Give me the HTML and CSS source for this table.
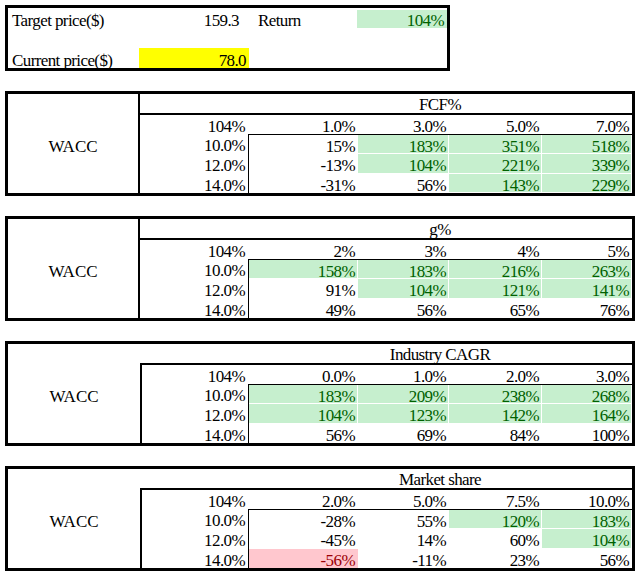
FILE: index.html
```html
<!DOCTYPE html>
<html lang="en">
<head>
<meta charset="utf-8">
<title>Valuation sensitivity</title>
<link rel="stylesheet" href="styles.css">
</head>
<body>
<div class="sheet">
  <div class="summary">
    <div class="c txt">Target price($)</div>
    <div class="c num pad10">159.3</div>
    <div class="c txt ind">Return</div>
    <div class="c num good">104%</div>
    <div class="c"></div><div class="c"></div><div class="c"></div><div class="c"></div>
    <div class="c txt">Current price($)</div>
    <div class="c num yellow">78.0</div>
    <div class="c"></div><div class="c"></div>
  </div>

  <div class="sens framed">
    <div class="wacc">WACC</div>
    <div class="title">FCF%</div>
    <div class="lbl">104%</div><div class="hd">1.0%</div><div class="hd">3.0%</div><div class="hd">5.0%</div><div class="hd">7.0%</div>
    <div class="lbl">10.0%</div><div class="v edge top">15%</div><div class="v top good">183%</div><div class="v top good">351%</div><div class="v top good">518%</div>
    <div class="lbl">12.0%</div><div class="v edge">-13%</div><div class="v good">104%</div><div class="v good">221%</div><div class="v good">339%</div>
    <div class="lbl">14.0%</div><div class="v edge">-31%</div><div class="v">56%</div><div class="v good">143%</div><div class="v good">229%</div>
  </div>

  <div class="sens framed">
    <div class="wacc">WACC</div>
    <div class="title">g%</div>
    <div class="lbl">104%</div><div class="hd">2%</div><div class="hd">3%</div><div class="hd">4%</div><div class="hd">5%</div>
    <div class="lbl">10.0%</div><div class="v edge top good">158%</div><div class="v top good">183%</div><div class="v top good">216%</div><div class="v top good">263%</div>
    <div class="lbl">12.0%</div><div class="v edge">91%</div><div class="v good">104%</div><div class="v good">121%</div><div class="v good">141%</div>
    <div class="lbl">14.0%</div><div class="v edge">49%</div><div class="v">56%</div><div class="v">65%</div><div class="v">76%</div>
  </div>

  <div class="sens open">
    <div class="wacc">WACC</div>
    <div class="title">Industry CAGR</div>
    <div class="lbl">104%</div><div class="hd">0.0%</div><div class="hd">1.0%</div><div class="hd">2.0%</div><div class="hd">3.0%</div>
    <div class="lbl">10.0%</div><div class="v edge top good">183%</div><div class="v top good">209%</div><div class="v top good">238%</div><div class="v top good">268%</div>
    <div class="lbl">12.0%</div><div class="v edge good">104%</div><div class="v good">123%</div><div class="v good">142%</div><div class="v good">164%</div>
    <div class="lbl">14.0%</div><div class="v edge">56%</div><div class="v">69%</div><div class="v">84%</div><div class="v">100%</div>
  </div>

  <div class="sens open">
    <div class="wacc">WACC</div>
    <div class="title">Market share</div>
    <div class="lbl">104%</div><div class="hd">2.0%</div><div class="hd">5.0%</div><div class="hd">7.5%</div><div class="hd">10.0%</div>
    <div class="lbl">10.0%</div><div class="v edge top">-28%</div><div class="v top">55%</div><div class="v top good">120%</div><div class="v top good">183%</div>
    <div class="lbl">12.0%</div><div class="v edge">-45%</div><div class="v">14%</div><div class="v">60%</div><div class="v good">104%</div>
    <div class="lbl">14.0%</div><div class="v edge bad">-56%</div><div class="v">-11%</div><div class="v">23%</div><div class="v">56%</div>
  </div>
</div>
</body>
</html>
```

FILE: styles.css
```css
* {
  box-sizing: border-box;
}

body {
  margin: 0;
  padding: 5px;
  background: #ffffff;
  font-family: "Liberation Serif", "Times New Roman", serif;
  font-size: 17px;
  letter-spacing: -0.6px;
  color: #000000;
}

.sheet {
  display: flex;
  flex-direction: column;
  align-items: flex-start;
  gap: 20px;
}

/* ---------- summary box ---------- */
.summary {
  display: grid;
  grid-template-columns: 131px 110px 108px 90px;
  grid-template-rows: repeat(3, 20px);
  border: 3px solid #000000;
}

.c {
  line-height: 14px;
  padding-top: 6px;
  white-space: nowrap;
}

.txt {
  padding-left: 4px;
}

.ind {
  padding-left: 9px;
}

.num {
  text-align: right;
  padding-right: 3px;
}

.pad10 {
  padding-right: 10px;
}

.yellow {
  background: #ffff00;
}

/* ---------- sensitivity tables ---------- */
.sens {
  display: grid;
  grid-template-columns: 132px 108px 110px 91px 93px 90px;
  grid-template-rows: 21px 19px 20px 20px 19px;
  border: 3px solid #000000;
  width: 630px;
}

.sens > div {
  line-height: 14px;
  padding-top: 5px;
  white-space: nowrap;
}

.wacc {
  grid-row: 1 / span 5;
  grid-column: 1;
  display: flex;
  align-items: center;
  justify-content: center;
  padding-top: 6px !important;
  letter-spacing: 0;
}

.framed .wacc {
  border-right: 2px solid #000000;
}

.title {
  grid-column: 2 / span 5;
  text-align: center;
  padding-left: 108px;
  padding-top: 4px !important;
  border-bottom: 2px solid #000000;
}

.open .lbl {
  border-left: 2px solid #000000;
}

.lbl,
.hd,
.v {
  text-align: right;
  padding-right: 3px;
}

.v.edge {
  border-left: 1px solid #000000;
}

.v.top {
  border-top: 1px solid #000000;
}

.good {
  background: #c6efce;
  color: #006100;
  box-shadow: inset -1px -1px 0 #ffffff;
}

.summary .good {
  box-shadow: inset 0 2px 0 #ffffff;
}

.bad {
  background: #ffc7ce;
  color: #9c0006;
}
```
